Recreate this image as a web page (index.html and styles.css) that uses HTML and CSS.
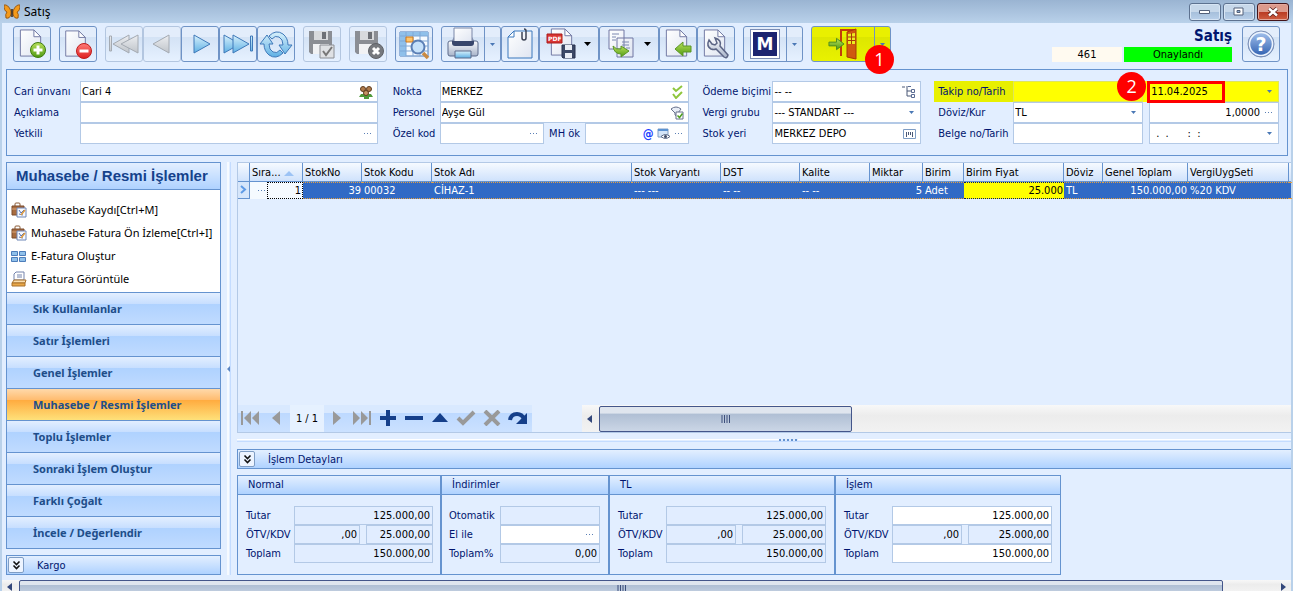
FILE: index.html
```html
<!DOCTYPE html>
<html lang="tr">
<head>
  <meta charset="UTF-8">
  <meta name="viewport" content="width=device-width, initial-scale=1.0">
  <title>Satış</title>
  <link rel="stylesheet" href="styles.css">
</head>
<body>
  <!-- shared icon parts -->
  <svg class="defs" aria-hidden="true">
    <defs>
      <linearGradient id="gPaper" x1="0" y1="0" x2="1" y2="1"><stop offset="0" stop-color="#fff"/><stop offset="1" stop-color="#dfe5f1"/></linearGradient>
      <linearGradient id="gBlue" x1="0" y1="0" x2="0" y2="1"><stop offset="0" stop-color="#d9f1fc"/><stop offset="1" stop-color="#5eb0e4"/></linearGradient>
      <linearGradient id="gGray" x1="0" y1="0" x2="0" y2="1"><stop offset="0" stop-color="#eceef1"/><stop offset="1" stop-color="#bfc4ca"/></linearGradient>
      <linearGradient id="gGreen" x1="0" y1="0" x2="0" y2="1"><stop offset="0" stop-color="#b9e05a"/><stop offset="1" stop-color="#4f9a12"/></linearGradient>
      <linearGradient id="gRed" x1="0" y1="0" x2="0" y2="1"><stop offset="0" stop-color="#ff7b78"/><stop offset="1" stop-color="#dd1f1f"/></linearGradient>
      <linearGradient id="gHelp" x1="0" y1="0" x2="0" y2="1"><stop offset="0" stop-color="#a9c6ef"/><stop offset="1" stop-color="#2b5cae"/></linearGradient>
      <linearGradient id="gSteel" x1="0" y1="0" x2="0" y2="1"><stop offset="0" stop-color="#fafbfd"/><stop offset="1" stop-color="#a7b3c9"/></linearGradient>
      <symbol id="page" viewBox="0 0 24 30"><path d="M1 1h14l7 7v20H1z" fill="url(#gPaper)" stroke="#7077a3"/><path d="M15 1v7h7z" fill="#fff" stroke="#7077a3"/></symbol>
      <symbol id="floppy" viewBox="0 0 26 26"><path d="M1 1h23v23H3l-2-2z" fill="#8b8e94"/><path d="M6 1h14v9H6z" fill="#d8dadd"/><path d="M14 2h4v7h-4z" fill="#6d7076"/><path d="M5 14h16v10H5z" fill="#f1f2f4"/></symbol>
      <symbol id="arrowR" viewBox="0 0 18 14"><path d="M1 5h8V1l8 6-8 6V9H1z" fill="url(#gGreen)" stroke="#4d8c1c"/></symbol>
      <symbol id="down" viewBox="0 0 7 4"><path d="M0 0h7L3.500 4z" fill="currentColor"/></symbol>
      <symbol id="bag" viewBox="0 0 16 16"><path d="M4 4V2q0-1 1-1h3q1 0 1 1v2" fill="none" stroke="#8a5a35"/><path d="M1 4h12v9H1z" fill="#a86c40" stroke="#7b4a2a"/><path d="M1 7h12" stroke="#d9a476"/><path d="M6 6h9v9H6z" fill="#f6f9ff" stroke="#6f87b8"/><path d="M8 8l2 3 3-3M8 12l4 1" fill="none" stroke="#5673b5"/><path d="M10 13l4-5" stroke="#e09a3c" stroke-width="1.500"/></symbol>
      <symbol id="chev" viewBox="0 0 9 10"><path d="M1.500 1.500l3 3 3-3M1.500 5.500l3 3 3-3" fill="none" stroke="#111" stroke-width="1.600"/></symbol>
      <symbol id="grip" viewBox="0 0 9 8"><path d="M1 0v8M3.500 0v8M6 0v8M8.500 0v8" stroke="#3d4f7c"/></symbol>
    </defs>
  </svg>

  <header class="titlebar">
    <svg class="app-icon" viewBox="0 0 16 16"><path d="M7 7Q4 0 0 1q0 6 3 7-2 2-1 6 4 1 5-4zM9 7q3-7 7-6 0 6-3 7 2 2 1 6-4 1-5-4z" fill="#f49a1a" stroke="#9a5a14"/><path d="M8 5v8" stroke="#3a2410" stroke-width="1.500"/></svg>
    <h1>Satış</h1>
    <div class="win-buttons">
      <button class="win" aria-label="Simge durumuna küçült"><svg width="12" height="6"><path d="M.5 1.500h10v3H.5z" fill="#fff" stroke="#53607a"/></svg></button>
      <button class="win" aria-label="Ekranı kapla"><svg width="12" height="10"><path d="M1 1h9v7H1z" fill="#fff" stroke="#53607a"/><path d="M4 3.500h3v2H4z" fill="#8fb0d6" stroke="#53607a"/></svg></button>
      <button class="win close" aria-label="Kapat"><svg width="12" height="10"><path d="M2 1.500l8 7M10 1.500l-8 7" stroke="#5b2420" stroke-width="4"/><path d="M2 1.500l8 7M10 1.500l-8 7" stroke="#fff" stroke-width="2.500"/></svg></button>
    </div>
  </header>

  <div class="window">
    <div class="toolbar">
      <button class="tool" aria-label="Yeni"><svg viewBox="0 0 36 34"><use href="#page" x="5" y="2" width="24" height="29"/><circle cx="24" cy="23" r="7.500" fill="url(#gGreen)" stroke="#3f7d10"/><path d="M19.500 23h9M24 18.500v9" stroke="#fff" stroke-width="3"/></svg></button>
      <button class="tool" aria-label="Sil"><svg viewBox="0 0 36 34"><use href="#page" x="4" y="3" width="24" height="28"/><circle cx="24" cy="24" r="7.500" fill="url(#gRed)" stroke="#c01c1c"/><path d="M19.500 24h9" stroke="#fff" stroke-width="3"/></svg></button>
      <div class="tool-group">
        <button class="tool" disabled aria-label="İlk"><svg viewBox="0 0 36 34"><path d="M3.500 9h2v15h-2zM23 8v18L7 17z" fill="url(#gGray)" stroke="#a4aab2"/><path d="M32 8v18L15 17z" fill="url(#gGray)" stroke="#a4aab2"/></svg></button>
        <button class="tool" disabled aria-label="Önceki"><svg viewBox="0 0 36 34"><path d="M25 8v18L9 17z" fill="url(#gGray)" stroke="#a4aab2"/></svg></button>
        <button class="tool" aria-label="Sonraki"><svg viewBox="0 0 36 34"><path d="M12 8v18l16-9z" fill="url(#gBlue)" stroke="#3f79b9"/></svg></button>
        <button class="tool" aria-label="Son"><svg viewBox="0 0 36 34"><path d="M30.500 9h2v15h-2zM4 8v18l16-9z" fill="url(#gBlue)" stroke="#3f79b9"/><path d="M13 8v18l16-9z" fill="url(#gBlue)" stroke="#3f79b9"/></svg></button>
        <button class="tool" aria-label="Yenile"><svg viewBox="0 0 36 34"><path d="M11 9q7-7 14-2 5 4 5 11h4l-7 9-6-9h4q0-6-4-8-4-2-7 2zM25 26q-7 7-14 2-5-4-5-11H2l7-9 6 9h-4q0 6 4 8 4 2 7-2z" fill="url(#gBlue)" stroke="#3f79b9"/></svg></button>
      </div>
      <button class="tool" disabled aria-label="Kaydet"><svg viewBox="0 0 36 34"><use href="#floppy" x="4" y="3" width="26" height="26"/><path d="M16 18h14v13H16z" fill="#dfe1e4" stroke="#8b8e94"/><path d="M19 24l3 4 6-8" fill="none" stroke="#777" stroke-width="2"/></svg></button>
      <button class="tool" disabled aria-label="Vazgeç"><svg viewBox="0 0 36 34"><use href="#floppy" x="4" y="3" width="26" height="26"/><circle cx="26" cy="24" r="7.500" fill="#76797e" stroke="#5f6267"/><path d="M23 21l6 6M29 21l-6 6" stroke="#fff" stroke-width="3"/></svg></button>
      <button class="tool" aria-label="Listele"><svg viewBox="0 0 36 34"><path d="M4 5h28v24H4z" fill="#f7fbff" stroke="#4d7dba"/><path d="M4 5h28v4H4zM4 5h6v24H4z" fill="#8fc0ea"/><path d="M4 9h28M4 14h28M4 19h28M4 24h28M10 5v24M17 5v24M24 5v24" stroke="#7fa8d6"/><path d="M10 10h7v5h-7z" fill="#ffc56a" stroke="#c9771d"/><path d="M27 26l5 5" stroke="#c98a43" stroke-width="3.500"/><circle cx="22" cy="20" r="6.500" fill="#c6e2fb" stroke="#5b7fb5" stroke-width="2"/></svg></button>
      <div class="tool-group">
        <button class="tool split" aria-label="Yazdır"><svg viewBox="0 0 36 34"><path d="M6 15l3-5h18l3 5z" fill="#8b97b3"/><path d="M3 16q0-2 2-2h26q2 0 2 2v11q0 2-2 2H5q-2 0-2-2z" fill="url(#gSteel)" stroke="#5c6b8b"/><path d="M9 1h18v14H9z" fill="url(#gPaper)" stroke="#7b87a8"/><path d="M7 14h22v2q0 3-3 3H10q-3 0-3-3z" fill="#38466b"/><path d="M10 24h16v7H10z" fill="url(#gBlue)" stroke="#5c6b8b"/></svg><span class="drop"><svg class="caret"><use href="#down"/></svg></span></button>
        <button class="tool" aria-label="Ekle"><svg viewBox="0 0 36 34"><path d="M12 4h18v27H6V10z" fill="url(#gPaper)" stroke="#3a78bd"/><path d="M12 4v6H6z" fill="#fff" stroke="#3a78bd"/><path d="M20 5v6q0 2 2 2t2-2V4q0-2-2-2" fill="none" stroke="#3b4254" stroke-width="1.500"/></svg></button>
        <button class="tool wide" aria-label="PDF kaydet"><svg viewBox="0 0 36 34"><use href="#page" x="10" y="1" width="24" height="29"/><path d="M7 7h15v9H7z" fill="#d93531" stroke="#a91c1c"/><text x="8" y="14" class="pdf">PDF</text><path d="M22 18h13v13H23l-1-1z" fill="#3c4866" stroke="#27314e"/><path d="M25 18h7v5h-7zM25 26h7v5h-7z" fill="#e9edf5"/></svg><svg class="caret dark"><use href="#down"/></svg></button>
        <button class="tool wide" aria-label="Kopyala"><svg viewBox="0 0 36 34"><path d="M9 3h15v19H9zM17 11h16v19H17z" fill="url(#gPaper)" stroke="#7077a3"/><path d="M12 7h7M12 10h4M12 13h4M22 15h7M22 18h7M26 21h4" stroke="#7c88b0"/><path d="M13 19q3 4 8 3v-3l8 5-8 6v-3q-7 0-8-8z" fill="url(#gGreen)" stroke="#5b9626"/></svg><svg class="caret dark"><use href="#down"/></svg></button>
        <button class="tool" aria-label="İçe al"><svg viewBox="0 0 36 34"><use href="#page" x="5" y="2" width="24" height="29"/><path d="M31 19h-8v-4l-8 7 8 7v-4h8z" fill="url(#gGreen)" stroke="#5b9626"/></svg></button>
        <button class="tool" aria-label="Ayarlar"><svg viewBox="0 0 36 34"><use href="#page" x="5" y="2" width="24" height="29"/><path d="M11 13q-3 6 2 9 3 1 5 0l8 8q3 2 4-2l-8-9q2-6-5-8l2 5-2 2-3-1z" fill="url(#gSteel)" stroke="#5c6585" stroke-width="1.500"/></svg></button>
      </div>
      <button class="tool split" aria-label="Mikro"><span class="m-logo">M</span><span class="drop"><svg class="caret"><use href="#down"/></svg></span></button>
      <button class="tool exit" aria-label="Çıkış"><svg viewBox="0 0 36 34"><path d="M16 29V3h14" fill="none" stroke="#c23c0c" stroke-width="2"/><path d="M22 5l9-3v30l-9-2z" fill="#cf5a10" stroke="#a83a06"/><path d="M23 7l7-1v11h-7z" fill="#ecec20"/><path d="M26.500 6v11M23 10h7M23 13.500h7" stroke="#a83a06"/><use href="#arrowR" x="3" y="10" width="17" height="14"/></svg><span class="drop"><svg class="caret"><use href="#down"/></svg></span><span class="badge">1</span></button>

      <div class="status">
        <strong>Satış</strong>
        <div class="status-row">
          <span class="doc-no">461</span>
          <span class="approved">Onaylandı</span>
        </div>
      </div>
      <button class="tool" aria-label="Yardım"><svg viewBox="0 0 36 34"><circle cx="18" cy="17" r="13" fill="url(#gHelp)" stroke="#7d8fb3"/><circle cx="18" cy="17" r="11.500" fill="none" stroke="#eef4fd" stroke-width="1.500"/><text x="18" y="24" class="help">?</text></svg></button>
    </div>

    <form class="doc-form">
      <div class="fields account">
        <label for="cari">Cari ünvanı</label>
        <div class="field"><input id="cari" value="Cari 4"><svg width="14" height="14"><path d="M2 9h10l2 3H0zM5 12h5v2H5z" fill="#4f9a3a"/><circle cx="4" cy="4" r="2.500" fill="#b07b4c" stroke="#5f3c1e"/><circle cx="10" cy="4" r="2.500" fill="#b07b4c" stroke="#5f3c1e"/><circle cx="7" cy="8" r="2.500" fill="#c79465" stroke="#5f3c1e"/></svg></div>
        <label for="aciklama">Açıklama</label>
        <div class="field"><input id="aciklama"></div>
        <label for="yetkili">Yetkili</label>
        <div class="field"><input id="yetkili"><button type="button" class="dots" aria-label="Seç"></button></div>
      </div>

      <div class="fields place">
        <label for="nokta">Nokta</label>
        <div class="field"><input id="nokta" value="MERKEZ"><svg width="14" height="14"><path d="M3 3l3 3 6-5M3 9l3 4 6-6" fill="none" stroke="#8fc63d" stroke-width="2"/></svg></div>
        <label for="personel">Personel</label>
        <div class="field"><input id="personel" value="Ayşe Gül"><svg width="14" height="14"><path d="M1 3q5-4 10 0L8 7v4L5 9V7z" fill="#e8edf6" stroke="#66708c"/><path d="M6 6h7v7H6z" fill="#fff" stroke="#66708c"/><path d="M7.500 9.500l2 2 3-4" fill="none" stroke="#4e9e1d" stroke-width="1.500"/></svg></div>
        <label for="ozel">Özel kod</label>
        <div class="field-pair">
          <div class="field"><input id="ozel"><button type="button" class="dots" aria-label="Seç"></button></div>
          <label for="mh">MH ök</label>
          <div class="field"><input id="mh"><span class="at">@</span><svg width="14" height="14"><path d="M1 2h10v8H1z" fill="#d4e5f8" stroke="#7f9dc4"/><path d="M1 2h10v2H1z" fill="#5c93d2"/><path d="M4 9.500q4.500-4 9 0-4.500 4-9 0z" fill="#fff" stroke="#5a6985"/><circle cx="8.500" cy="9.500" r="1.500" fill="#3e4b68"/></svg><button type="button" class="dots" aria-label="Seç"></button></div>
        </div>
      </div>

      <div class="fields payment">
        <label for="odeme">Ödeme biçimi</label>
        <div class="field"><input id="odeme" value="-- --"><svg width="14" height="14"><path d="M0 2h3M5 1v10h4M5 6h4" fill="none" stroke="#4a5876"/><path d="M6 1.500h3M9.500 4.500h3v3h-3zM9.500 9.500h3v3h-3z" fill="#fff" stroke="#5a6c94"/></svg></div>
        <label for="vergi">Vergi grubu</label>
        <div class="field"><select id="vergi"><option>--- STANDART ---</option></select><svg class="caret"><use href="#down"/></svg></div>
        <label for="stok">Stok yeri</label>
        <div class="field"><input id="stok" value="MERKEZ DEPO"><svg width="14" height="14"><path d="M1.500 2.500h12v9h-12z" fill="#fff" stroke="#7f9dc4"/><path d="M4.500 5v5M6.500 5v3M8.500 5v3M10.500 5v5" stroke="#4a5876"/></svg></div>
      </div>

      <div class="fields tracking">
        <label for="takip" class="marked">Takip no/Tarih</label>
        <div class="field-pair marked">
          <div class="field"><input id="takip"><span class="badge">2</span></div>
          <div class="field date"><input value="11.04.2025" aria-label="Tarih"><svg class="caret"><use href="#down"/></svg></div>
        </div>
        <label for="doviz">Döviz/Kur</label>
        <div class="field-pair">
          <div class="field"><select id="doviz"><option>TL</option></select><svg class="caret"><use href="#down"/></svg></div>
          <div class="field"><input class="num" value="1,0000" aria-label="Kur"><button type="button" class="dots" aria-label="Seç"></button></div>
        </div>
        <label for="belge">Belge no/Tarih</label>
        <div class="field-pair">
          <div class="field"><input id="belge"></div>
          <div class="field"><input class="blank-date" value=".  .      :  :" aria-label="Belge tarihi"><svg class="caret"><use href="#down"/></svg></div>
        </div>
      </div>
    </form>

    <div class="workspace">
      <aside class="sidebar">
        <nav class="groups">
          <h2>Muhasebe / Resmi İşlemler</h2>
          <ul>
            <li><a href="#"><svg width="16" height="16"><use href="#bag"/></svg>Muhasebe Kaydı[Ctrl+M]</a></li>
            <li><a href="#"><svg width="16" height="16"><use href="#bag"/></svg>Muhasebe Fatura Ön İzleme[Ctrl+I]</a></li>
            <li><a href="#"><svg width="16" height="16"><path d="M.5 3.500h6v4h-6zM8.500 3.500h6v4h-6zM.5 9.500h6v4h-6zM8.500 9.500h6v4h-6z" fill="#8fc0ea" stroke="#4d7dba"/></svg>E-Fatura Oluştur</a></li>
            <li><a href="#"><svg width="16" height="16"><path d="M5 1h8v8H3V3z" fill="#fff" stroke="#7484ad"/><path d="M6 4h5M6 6h5" stroke="#7484ad"/><path d="M3 9h12l-1 3H1z" fill="#fbe0b0" stroke="#a8702a"/><path d="M1 12h13v3H1z" fill="#eaa848" stroke="#a8702a"/></svg>E-Fatura Görüntüle</a></li>
          </ul>
          <button>Sık Kullanılanlar</button>
          <button>Satır İşlemleri</button>
          <button>Genel İşlemler</button>
          <button class="active">Muhasebe / Resmi İşlemler</button>
          <button>Toplu İşlemler</button>
          <button>Sonraki İşlem Oluştur</button>
          <button>Farklı Çoğalt</button>
          <button>İncele / Değerlendir</button>
        </nav>
        <div class="bar"><button class="expand" aria-label="Aç"><svg width="9" height="10"><use href="#chev"/></svg></button>Kargo</div>
      </aside>

      <div class="v-split"><svg width="3" height="6"><path d="M3 0v6L0 3z" fill="#5b86c4"/></svg></div>

      <main class="content">
        <section class="grid">
          <table>
            <colgroup><col class="w-mark"><col class="w-order"><col class="w-no"><col class="w-code"><col class="w-name"><col class="w-variant"><col class="w-dst"><col class="w-quality"><col class="w-qty"><col class="w-unit"><col class="w-price"><col class="w-cur"><col class="w-total"><col class="w-tax"><col></colgroup>
            <thead>
              <tr><th></th><th>Sıra... <svg width="10" height="5"><path d="M0 5l5-5 5 5z" fill="#9cc3f5"/></svg></th><th>StokNo</th><th>Stok Kodu</th><th>Stok Adı</th><th>Stok Varyantı</th><th>DST</th><th>Kalite</th><th>Miktar</th><th>Birim</th><th>Birim Fiyat</th><th>Döviz</th><th>Genel Toplam</th><th>VergiUygSeti</th><th></th></tr>
            </thead>
            <tbody>
              <tr><td class="mark"><svg width="7" height="9"><path d="M1 1l4 3.500L1 8" fill="none" stroke="#5f9be6" stroke-width="2"/></svg></td><td class="order"><div><button class="dots" aria-label="Seç"></button><span>1</span></div></td><td class="num">39</td><td>00032</td><td>CİHAZ-1</td><td>--- ---</td><td>-- --</td><td>-- --</td><td class="num">5</td><td>Adet</td><td class="num price">25.000</td><td>TL</td><td class="num">150.000,00</td><td>%20 KDV</td><td></td></tr>
            </tbody>
          </table>
          <div class="grid-foot">
            <div class="pager">
              <button aria-label="İlk"><svg viewBox="0 0 20 16"><path d="M1 1h2v14H1zM11 1v14L4 8zM19 1v14l-7-7z" fill="#999"/></svg></button>
              <button aria-label="Önceki"><svg viewBox="0 0 20 16"><path d="M14 1v14L6 8z" fill="#999"/></svg></button>
              <span>1 / 1</span>
              <button aria-label="Sonraki"><svg viewBox="0 0 20 16"><path d="M7 1v14l8-7z" fill="#999"/></svg></button>
              <button aria-label="Son"><svg viewBox="0 0 20 16"><path d="M17 1h2v14h-2zM9 1v14l7-7zM1 1v14l7-7z" fill="#999"/></svg></button>
              <button aria-label="Ekle"><svg viewBox="0 0 20 16"><path d="M8 0h4v6h6v4h-6v6H8v-6H2V6h6z" fill="#153f8a"/></svg></button>
              <button aria-label="Çıkar"><svg viewBox="0 0 20 16"><path d="M1 6h18v4H1z" fill="#153f8a"/></svg></button>
              <button aria-label="Düzenle"><svg viewBox="0 0 20 16"><path d="M2 12l8-9 8 9z" fill="#153f8a"/></svg></button>
              <button aria-label="Onayla"><svg viewBox="0 0 20 16"><path d="M2 8l5 5L18 2" fill="none" stroke="#999" stroke-width="4"/></svg></button>
              <button aria-label="İptal"><svg viewBox="0 0 20 16"><path d="M3 1l14 14M17 1L3 15" stroke="#999" stroke-width="4"/></svg></button>
              <button aria-label="Yenile"><svg viewBox="0 0 20 16"><path d="M2 10q1-6 7-6 5 0 7 5" fill="none" stroke="#153f8a" stroke-width="4"/><path d="M19 3v11H8z" fill="#153f8a"/></svg></button>
            </div>
            <div class="scroll"><svg class="arrow" width="5" height="8"><path d="M5 0v8L0 4z" fill="#33477a"/></svg><div class="thumb"><svg width="9" height="8"><use href="#grip"/></svg></div></div>
          </div>
        </section>

        <div class="h-split"><i></i></div>

        <div class="bar"><button class="expand" aria-label="Aç"><svg width="9" height="10"><use href="#chev"/></svg></button>İşlem Detayları</div>

        <div class="totals">
          <section class="normal">
            <h3>Normal</h3>
            <div class="sum-rows">
              <label for="n1">Tutar</label><input id="n1" class="full" value="125.000,00" readonly>
              <label for="n2">ÖTV/KDV</label><input id="n2" value=",00" readonly><input value="25.000,00" aria-label="KDV" readonly>
              <label for="n3">Toplam</label><input id="n3" class="full" value="150.000,00" readonly>
            </div>
          </section>
          <section class="discounts">
            <h3>İndirimler</h3>
            <div class="sum-rows">
              <label for="d1">Otomatik</label><input id="d1" readonly>
              <label for="d2">El ile</label><div class="field"><input id="d2"><button class="dots" aria-label="Seç"></button></div>
              <label for="d3">Toplam%</label><input id="d3" value="0,00" readonly>
            </div>
          </section>
          <section class="local">
            <h3>TL</h3>
            <div class="sum-rows">
              <label for="t1">Tutar</label><input id="t1" class="full" value="125.000,00" readonly>
              <label for="t2">ÖTV/KDV</label><input id="t2" value=",00" readonly><input value="25.000,00" aria-label="KDV" readonly>
              <label for="t3">Toplam</label><input id="t3" class="full" value="150.000,00" readonly>
            </div>
          </section>
          <section class="local">
            <h3>İşlem</h3>
            <div class="sum-rows">
              <label for="i1">Tutar</label><input id="i1" class="full" value="125.000,00">
              <label for="i2">ÖTV/KDV</label><input id="i2" value=",00" readonly><input value="25.000,00" aria-label="KDV" readonly>
              <label for="i3">Toplam</label><input id="i3" class="full" value="150.000,00">
            </div>
          </section>
        </div>
      </main>
    </div>

    <div class="scroll page-scroll"><svg class="arrow" width="5" height="8"><path d="M5 0v8L0 4z" fill="#33477a"/></svg><div class="thumb"><svg width="9" height="8"><use href="#grip"/></svg></div><svg class="arrow" width="5" height="8"><path d="M0 0v8l5-4z" fill="#33477a"/></svg></div>
  </div>
</body>
</html>
```
FILE: styles.css
```css
*, *::before {
  box-sizing: border-box;
}

body {
  margin: 0;
  min-height: 100vh;
  display: flex;
  flex-direction: column;
  font-family: "DejaVu Sans Condensed", "DejaVu Sans", sans-serif;
  font-size: 11px;
  color: #000;
  background: #e2eeff;
}

button, input, select {
  font: inherit;
  color: inherit;
  margin: 0;
  padding: 0;
  border: none;
  background: none;
}

h1, h2, h3, ul {
  margin: 0;
  padding: 0;
}

.defs {
  position: absolute;
  width: 0;
  height: 0;
}

.caret {
  width: 5px;
  height: 3px;
  color: #4a78b5;
}

.caret.dark {
  width: 7px;
  height: 4px;
  color: #000;
}

/* title bar */
.titlebar {
  display: flex;
  align-items: center;
  height: 23px;
  padding: 0 4px;
  background: linear-gradient(#9ab4d2, #b9d1ea);
}

.app-icon {
  width: 16px;
  height: 16px;
  margin-right: 4px;
}

.titlebar h1 {
  font: 12px "Noto Sans", sans-serif;
  flex: 1;
}

.win-buttons {
  display: flex;
  gap: 2px;
}

.win {
  display: flex;
  align-items: center;
  justify-content: center;
  width: 32px;
  height: 18px;
  border: 1px solid #5d7290;
  border-radius: 3px;
  background: linear-gradient(#c7d8ea 50%, #a6bfdb 50%, #b9d0ea);
  box-shadow: inset 0 0 0 1px #d7e5f4;
}

.win.close {
  border-color: #431419;
  background: linear-gradient(#dc9a8c 50%, #b93a22 50%, #cf5f42);
  box-shadow: inset 0 0 0 1px #e3a89c;
}

.window {
  flex: 1;
  display: flex;
  flex-direction: column;
  border: solid #b9d1ea;
  border-width: 0 2px;
}

/* toolbar */
.toolbar {
  display: flex;
  gap: 8px;
  padding: 3px 11px 7px;
}

.tool-group {
  display: flex;
}

.tool {
  display: flex;
  align-items: center;
  width: 38px;
  height: 36px;
  border: 1px solid #6f93c6;
  border-radius: 3px;
  background: linear-gradient(#e3edfb 28%, #d3e2f5 28%, #e6f1ff);
}

.tool > svg:first-child {
  width: 36px;
  height: 34px;
}

.tool:disabled {
  border-color: #b3c6e0;
}

.tool.wide, .tool.split {
  width: 60px;
}

.tool.split > svg:first-child {
  width: 42px;
}

.tool.wide > .caret {
  margin-left: 8px;
}

.drop {
  display: flex;
  align-items: center;
  justify-content: center;
  width: 16px;
  height: 34px;
  border-left: 1px solid #6f93c6;
}

.m-logo {
  width: 30px;
  height: 30px;
  margin: 0 6px;
  border: 1px solid #7c8db5;
  background: #1c2470;
  box-shadow: inset 0 0 0 2px #fff;
  color: #fff;
  font: bold 17px/28px "DejaVu Sans", sans-serif;
  text-align: center;
}

.tool.exit {
  position: relative;
  width: 80px;
  background: linear-gradient(#e9f000 28%, #dde600 28%, #e9f200);
}

.tool.exit > svg:first-child {
  width: 62px;
}

.badge {
  position: absolute;
  width: 29px;
  height: 29px;
  border-radius: 50%;
  background: #f00;
  color: #fff;
  font: 18px/29px "Open Sans", sans-serif;
  text-align: center;
}

.exit .badge {
  right: -4px;
  bottom: -13px;
}

.pdf {
  font: bold 6px "DejaVu Sans", sans-serif;
  fill: #fff;
}

.help {
  font: bold 19px "DejaVu Sans", sans-serif;
  fill: #fff;
  text-anchor: middle;
}

.status {
  margin-left: auto;
  margin-right: 2px;
  text-align: right;
}

.status strong {
  display: block;
  font-size: 15px;
  line-height: 21px;
  color: #00156e;
}

.status-row {
  display: flex;
  gap: 2px;
  line-height: 15px;
  text-align: center;
}

.doc-no {
  width: 70px;
  background: #fffaf0;
}

.approved {
  width: 108px;
  background: #0f0;
}

/* document fields */
.doc-form {
  display: grid;
  grid-template-columns: 364fr 297fr 217fr 343fr;
  column-gap: 15px;
  margin: 0 3px 6px 4px;
  padding: 11px 8px 11px 7px;
  border: 1px solid #6593cf;
}

.fields {
  display: grid;
  grid-auto-rows: 21px;
  align-items: center;
  color: #00156e;
}

.account { grid-template-columns: 66px 1fr; }
.place { grid-template-columns: 47px 1fr; }
.payment { grid-template-columns: 70px 1fr; margin-left: -2px; }
.tracking { grid-template-columns: 77px 1fr; }

.tracking > label {
  padding-left: 2px;
  white-space: nowrap;
}

.field {
  position: relative;
  display: flex;
  align-items: center;
  gap: 4px;
  flex: 1;
  min-width: 0;
  height: 21px;
  padding-right: 4px;
  border: 1px solid #b3c9e6;
  background: #fff;
}

.field input, .field select {
  flex: 1;
  width: 20px;
  min-width: 0;
  height: 19px;
  padding: 0 1px;
  color: #000;
  appearance: none;
}

.field .num {
  text-align: right;
}

.field .blank-date {
  padding-left: 6px;
  white-space: pre;
}

.field .caret {
  margin-right: 2px;
}

.dots {
  width: 8px;
  height: 1px;
  margin-right: 1px;
  background: repeating-linear-gradient(90deg, #5b7fb5 0 1px, transparent 1px 3px);
}

.at {
  color: #1a3cff;
  font-size: 12px;
  font-weight: bold;
}

.field-pair {
  display: flex;
  align-items: center;
  gap: 6px;
}

.place .field-pair {
  gap: 5px;
}

.marked {
  line-height: 21px;
  background: #e8f000;
}

.tracking > label.marked {
  margin-left: -2px;
  padding-left: 4px;
}

.marked .field {
  background: #ff0;
  border-color: #dfe65a;
}

.field-pair.marked {
  position: relative;
  z-index: 1;
  background: #ff0;
}

.marked .badge {
  right: -4px;
  top: -10px;
  z-index: 1;
}

.date::before {
  content: "";
  position: absolute;
  left: -3px;
  top: -1px;
  width: 78px;
  height: 22px;
  border: 3px solid #f00;
  pointer-events: none;
}

/* main area */
.workspace {
  flex: 1;
  display: flex;
  margin-bottom: 5px;
}

.sidebar {
  width: 215px;
  margin-left: 4px;
}

.groups {
  margin-bottom: 6px;
  border: 1px solid #6593cf;
  font: 11px "Noto Sans", sans-serif;
}

.groups h2 {
  padding-left: 9px;
  font: bold 15px/26px "Liberation Sans", sans-serif;
  color: #15428b;
  background: linear-gradient(#e3efff, #afd2ff);
  border-bottom: 1px solid #6593cf;
}

.groups ul {
  list-style: none;
  padding: 8px 0 2px 4px;
  background: #fff;
}

.groups a {
  display: flex;
  align-items: center;
  gap: 4px;
  height: 23px;
  color: #000;
  text-decoration: none;
  white-space: nowrap;
}

.groups button {
  display: block;
  width: 100%;
  height: 32px;
  padding-left: 26px;
  border-top: 1px solid #6593cf;
  background: linear-gradient(#e3efff, #c6deff 36%, #afd2ff 36%, #c0dbff);
  color: #204d89;
  font-weight: bold;
  text-align: left;
}

.groups button.active {
  background: linear-gradient(#ffd9aa, #ffbb6e 36%, #ffab3f 36%, #fee17a);
}

.bar {
  display: flex;
  align-items: center;
  gap: 13px;
  height: 20px;
  padding-left: 1px;
  border: 1px solid #6593cf;
  background: linear-gradient(#e3efff, #afd2ff);
  color: #00156e;
}

.content .bar {
  border-right: none;
}

.expand {
  display: flex;
  align-items: center;
  justify-content: center;
  width: 16px;
  height: 16px;
  border: 1px solid #7f9dc4;
  border-radius: 2px;
  background: #edf4ff;
}

.v-split {
  display: flex;
  align-items: center;
  width: 4px;
  margin: 0 6px;
  border-left: 2px solid #f6faff;
  border-right: 1px solid #c4dcff;
}

.v-split svg {
  flex: none;
  margin-left: -2px;
}

.content {
  flex: 1;
  min-width: 0;
  display: flex;
  flex-direction: column;
}

.grid {
  flex: 1;
  display: flex;
  flex-direction: column;
  border: 1px solid #b3c9e6;
  border-right: none;
}

.grid table {
  width: 100%;
  table-layout: fixed;
  border-collapse: separate;
  border-spacing: 0;
}

.w-mark { width: 12px; }
.w-order { width: 53px; }
.w-no { width: 59px; }
.w-code { width: 70px; }
.w-name { width: 200px; }
.w-variant { width: 89px; }
.w-dst { width: 79px; }
.w-quality { width: 70px; }
.w-qty { width: 53px; }
.w-unit { width: 41px; }
.w-price { width: 100px; }
.w-cur { width: 39px; }
.w-total { width: 85px; }
.w-tax { width: 101px; }

.grid th {
  height: 19px;
  padding: 1px 2px 0;
  border-right: 1px solid #6593cf;
  border-bottom: 1px solid #6593cf;
  background: linear-gradient(#f6faff, #cfe2fc);
  font-weight: normal;
  text-align: left;
  white-space: nowrap;
  overflow: hidden;
}

.grid th:last-child {
  border-right: none;
}

.grid td {
  height: 17px;
  padding: 1px 2px 0;
  border: dotted #e6a040;
  border-width: 1px 0;
  background: #316ac5;
  color: #fff;
  line-height: 14px;
  white-space: nowrap;
}

.grid .num {
  padding-right: 1px;
  text-align: right;
}

.grid td.mark {
  border: solid #6593cf;
  border-width: 0 1px 1px 0;
  background: #d6e6fb;
}

.grid td.order {
  padding: 0;
  border: none;
  background: #f5faff;
  color: #000;
  text-align: right;
}

.order div {
  display: flex;
  align-items: center;
  padding-left: 8px;
}

.order span {
  flex: 1;
  height: 17px;
  padding-right: 1px;
  border: 1px dotted #000;
  line-height: 16px;
}

.grid td.price {
  background: #ff0;
  color: #000;
  border-color: #00156e;
}

.grid-foot {
  display: flex;
  margin-top: auto;
}

.pager {
  display: flex;
  height: 27px;
  margin-right: 50px;
  background: linear-gradient(#d9e9ff 30%, #bdd9ff 30%, #cbe1ff);
}

.pager button {
  width: 26px;
  padding: 0 4px 2px 2px;
}

.pager svg {
  display: block;
  width: 20px;
  height: 16px;
}

.pager span {
  width: 34px;
  line-height: 27px;
  text-align: center;
  background: #e6f1ff;
}

.scroll {
  flex: 1;
  display: flex;
  align-items: center;
  height: 27px;
  padding-left: 5px;
  background: linear-gradient(#f8f8f8, #ececec 40%, #f2f2f2);
}

.scroll .thumb {
  display: flex;
  align-items: center;
  justify-content: center;
  width: 36%;
  height: 26px;
  margin-left: 7px;
  border: 1px solid #44568a;
  border-radius: 2px;
  background: linear-gradient(#dfe5ee 25%, #b0bfd4 30%, #cbd6e6);
}

.h-split {
  height: 16px;
  padding-top: 6px;
}

.h-split::before {
  content: "";
  display: block;
  height: 3px;
  border-top: 1px solid #fff;
  border-bottom: 1px solid #c4dcff;
}

.h-split i {
  display: block;
  width: 19px;
  height: 2px;
  margin: -3px auto 0;
  position: relative;
  left: 24px;
  background: repeating-linear-gradient(90deg, #6593cf 0 2px, #e1edff 2px 4px);
}

.totals {
  display: flex;
  margin-top: 6px;
  color: #00156e;
}

.totals section {
  height: 100px;
  border: 1px solid #6593cf;
}

.normal { width: 204px; }
.discounts { width: 168px; }
.local { width: 226px; }

.totals h3 {
  padding-left: 10px;
  font-size: 11px;
  font-weight: normal;
  line-height: 18px;
  border-bottom: 1px solid #6593cf;
  background: linear-gradient(#e3efff, #afd2ff);
}

.sum-rows {
  display: grid;
  grid-auto-rows: 19px;
  column-gap: 6px;
  align-items: center;
  padding: 11px 7px 0 8px;
}

.sum-rows label {
  margin-right: -6px;
  white-space: nowrap;
}

.normal .sum-rows {
  grid-template-columns: 42px 66px 67px;
}

.local .sum-rows {
  grid-template-columns: 42px 70px 84px;
}

.discounts .sum-rows {
  grid-template-columns: 45px 100px;
  padding-left: 7px;
}

.sum-rows input {
  width: 100%;
  height: 19px;
  padding: 0 2px;
  border: 1px solid #b3c9e6;
  background: #fff;
  color: #000;
  text-align: right;
}

.sum-rows input:read-only {
  background: #e1edff;
}

.sum-rows .full {
  grid-column: span 2;
}

.sum-rows .field {
  height: 19px;
}

.sum-rows .field input {
  height: 17px;
  border: none;
}

.page-scroll {
  flex: none;
  height: 11px;
  overflow: hidden;
  align-items: flex-start;
}

.page-scroll .arrow {
  margin-top: 3px;
}

.page-scroll .thumb {
  flex: 1;
  height: 17px;
  margin-right: 58px;
}

.page-scroll .arrow:last-child {
  margin-right: 5px;
}
```
